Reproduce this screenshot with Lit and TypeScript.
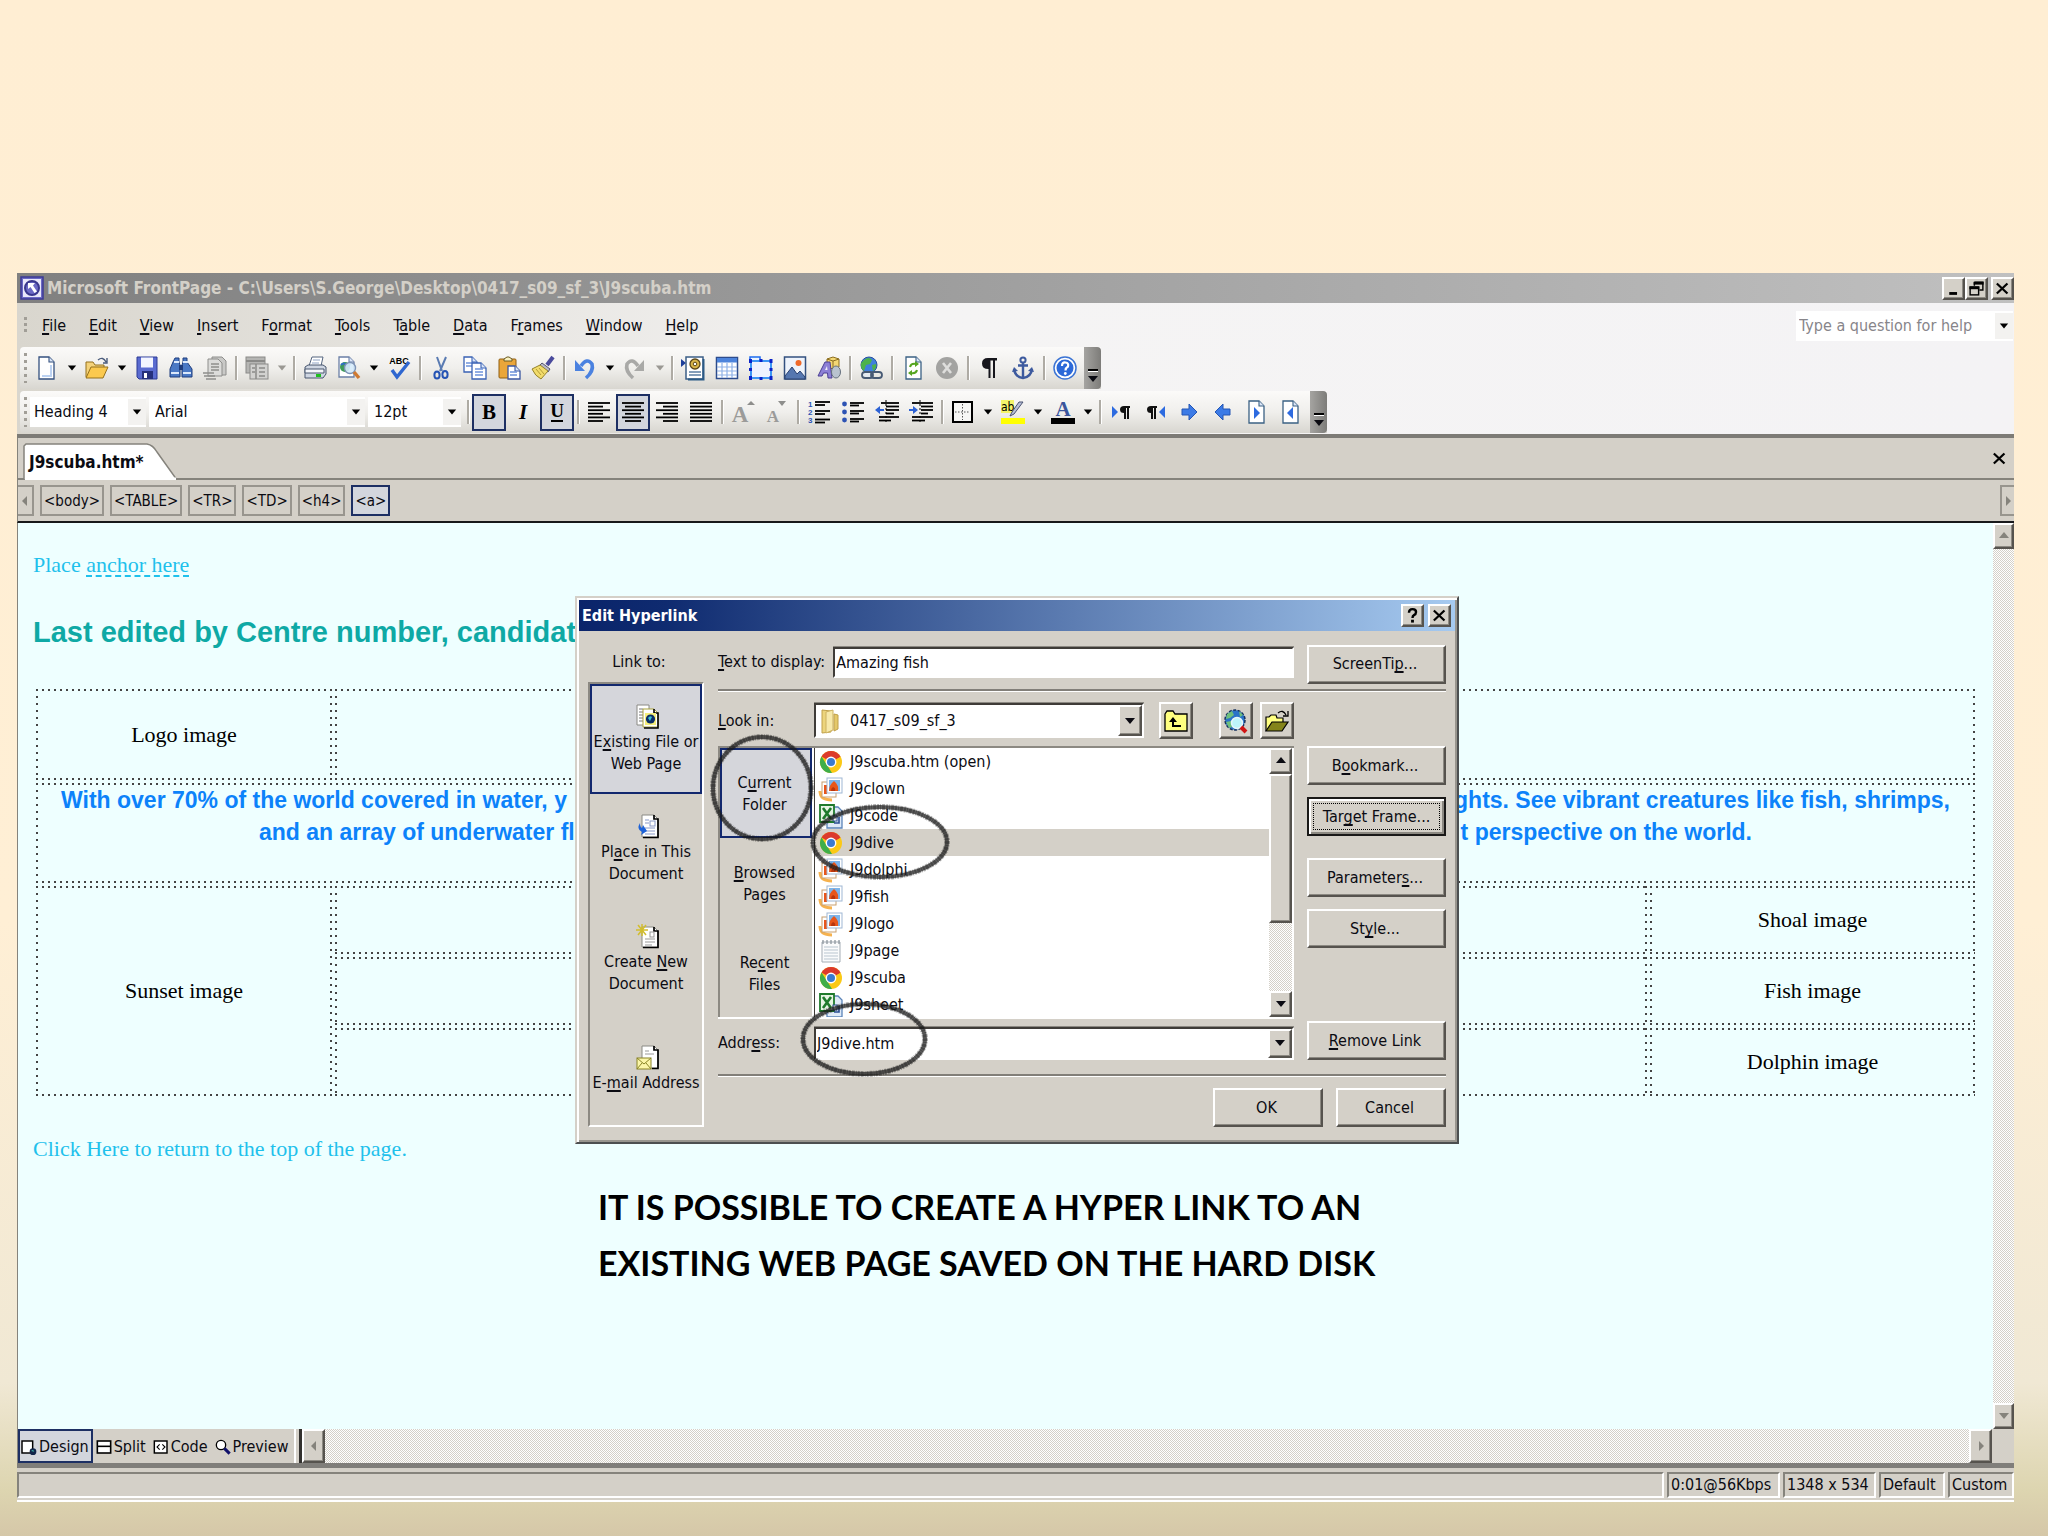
import { LitElement, html, svg, css, nothing, TemplateResult } from "lit";
import { customElement, state } from "lit/decorators.js";
import { classMap } from "lit/directives/class-map.js";

/* "&" marks the access key: "&File" underlines the F. */
const key = (text: string) => {
  const i = text.indexOf("&");
  return i < 0 ? html`${text}` : html`${text.slice(0, i)}<u>${text[i + 1]}</u>${text.slice(i + 2)}`;
};

const page = (x: number, y: number, w: number, h: number, stroke = "#2f4f86") => svg`
  <path d="M${x} ${y}h${w - 5}l5 5v${h - 5}h-${w}z" fill="#fff" stroke=${stroke} stroke-width="1.3"/>
  <path d="M${x + w - 5} ${y}v5h5" fill="#dbe6f8" stroke=${stroke} stroke-width="1.1"/>`;

const lines = (ys: [number, number, number][], color = "#000") =>
  ys.map(([y, a, b]) => svg`<path d="M${a} ${y}H${b}" stroke=${color} stroke-width="1.8"/>`);

const glyphs: Record<string, unknown> = {
  new: svg`${page(4, 1, 15, 22, "#34507f")}<path d="M7 20h9V9" fill="none" stroke="#bcd2f2" stroke-width="2"/>`,
  open: svg`<path d="M1 21V6h7l2 3h9v3" fill="#f4d27a" stroke="#94701c"/><path d="M1 22l5-11h17l-5 11z" fill="#fbc94e" stroke="#94701c"/><path d="M13 4q5-4 8 2M22 2v5h-4" fill="none" stroke="#4a5b7c" stroke-width="1.4"/>`,
  save: svg`<path d="M2 1h20v22H4l-2-2z" fill="#5a6bd0" stroke="#2c3a94"/><rect x="6" y="1.5" width="12" height="10" fill="#f3f5ff"/><rect x="7" y="15" width="11" height="8" fill="#26307c"/><rect x="9" y="17" width="3" height="5" fill="#fff"/>`,
  find: svg`<path d="M6 2h4v4l1 3v12H1v-8l3-7zM14 2h4v4l5 7v8H13V9l1-3z" fill="#4a78c4" stroke="#1f3c7c"/><path d="M2 17h8M14 17h8M5 6h5M14 6h5" stroke="#dbe8fb" stroke-width="2"/><rect x="10" y="9" width="4" height="5" fill="#1f3c7c"/>`,
  publish: svg`<path d="M9 1h10l4 4v14H9z" fill="#c9c9c7" stroke="#8e8e8c"/><path d="M5 3h10l4 4v13H5z" fill="#dcdcda" stroke="#8e8e8c"/><path d="M8 8h8M8 11h8M8 14h8M0 17h11M1 20h11M3 23h10" stroke="#8e8e8c" stroke-width="1.6"/>`,
  pane: svg`<rect x="1" y="1" width="19" height="16" fill="#b5b5b3" stroke="#8a8a88"/><path d="M1 5h19" stroke="#8a8a88" stroke-width="2"/><rect x="5" y="8" width="18" height="15" fill="#d2d2d0" stroke="#8a8a88"/><path d="M11 8v15M14 12h6M14 16h6M14 20h6M7 12h3M7 16h3" stroke="#8a8a88" stroke-width="1.5"/>`,
  print: svg`<path d="M6 10L9 1h11l-2 9" fill="#fff" stroke="#55657f"/><path d="M10 4h7M9 7h7" stroke="#8ea2c4"/><path d="M2 11l3-2h15l3 2v7l-3 4H2z" fill="#cfd6e2" stroke="#48566e"/><path d="M2 13h19v4H2z" fill="#f4f6fa" stroke="#48566e"/><rect x="13" y="18" width="5" height="3" fill="#1ec01e"/>`,
  preview: svg`${page(2, 1, 15, 20, "#6b7fa6")}<circle cx="8" cy="11" r="5" fill="#3f9c58"/><path d="M4 9q3-3 5 0t4-1" stroke="#2f6fc6" fill="none" stroke-width="2"/><circle cx="13" cy="12" r="5.5" fill="#d6ebfb" fill-opacity=".9" stroke="#7d93b5" stroke-width="1.4"/><path d="M17 16l5 6" stroke="#d07a32" stroke-width="3.4"/>`,
  spell: svg`<text x="12" y="8" font-size="9" font-weight="700" text-anchor="middle" font-family="Liberation Sans, sans-serif">ABC</text><path d="M5 14l5 7L22 6" fill="none" stroke="#2f67d0" stroke-width="3.4"/>`,
  cut: svg`<path d="M8 1l5 14M17 1l-6 14" stroke="#5a7bb2" stroke-width="2"/><ellipse cx="8" cy="19" rx="2.6" ry="3.6" fill="none" stroke="#2553b4" stroke-width="2"/><ellipse cx="16" cy="18.5" rx="2.6" ry="3.6" fill="none" stroke="#2553b4" stroke-width="2"/>`,
  copy: svg`${page(1, 1, 13, 15, "#3a62b4")}<path d="M3 7h7M3 10h6" stroke="#6d93da" stroke-width="1.4"/>${page(9, 7, 14, 16, "#3a62b4")}<path d="M12 13h8M12 16h8M12 19h8" stroke="#6d93da" stroke-width="1.4"/>`,
  paste: svg`<rect x="2" y="3" width="17" height="19" rx="1" fill="#eaa63a" stroke="#8f5f13"/><path d="M7 5V3l3-2h2l3 2v2z" fill="#f7f0c0" stroke="#6b5a22"/>${page(11, 10, 12, 13, "#3a56a0")}<path d="M13 16h7M13 19h7" stroke="#6d93da" stroke-width="1.4"/>`,
  painter: svg`<path d="M22 1l-6 8" stroke="#4a4a9c" stroke-width="4"/><path d="M11 7l8 6-2 3-9-6z" fill="#b7b7c8" stroke="#55556e"/><path d="M9 9l8 6-7 8Q4 20 1 13z" fill="#f2dc6b" stroke="#94822a"/><path d="M5 13l5 6M8 12l5 6" stroke="#b59d38"/>`,
  undo: svg`<path d="M8 10Q14 1 19 8q2 7-6 14" fill="none" stroke="#4b82e0" stroke-width="3.6"/><path d="M2 4v11h10z" fill="#4b82e0"/>`,
  redo: svg`<path d="M15 10Q9 1 4 8q-2 7 6 14" fill="none" stroke="#a9a9a7" stroke-width="3.6"/><path d="M21 4v11H11z" fill="#a9a9a7"/>`,
  component: svg`<path d="M0 3l5 4-5 4z" fill="#1d3f9a"/><rect x="5" y="1" width="17" height="22" fill="#fff" stroke="#3b5e86" stroke-width="1.5"/><path d="M22.5 3v20.5H7" fill="none" stroke="#2b5a86" stroke-width="2"/><circle cx="14" cy="8" r="5" fill="#d8b54a" stroke="#5c4718" stroke-width="1.3"/><circle cx="14" cy="8" r="1.8" fill="#fff" stroke="#5c4718"/><path d="M8 16h12M8 19h12" stroke="#5c7fa4" stroke-width="1.5"/>`,
  table: svg`<rect x="1.5" y="1.5" width="21" height="21" fill="#fff" stroke="#2d4c8c" stroke-width="1.5"/><rect x="2" y="2" width="20" height="4.5" fill="#4d84dc"/><path d="M7 7v15M12 7v15M17 7v15M2 11h20M2 15h20M2 19h20" stroke="#8fb2e8" stroke-width="1.2"/>`,
  layer: svg`<path d="M1 1h10v5H1z" fill="#eaf4ff" stroke="#1e6cf0" stroke-width="1.5"/><rect x="2" y="5" width="20" height="17" fill="#eef2ff" stroke="#2a8cf4" stroke-width="1.8"/><path d="M0 3h3v4H0zM10.5 3h3v3h-3zM20.5 3h3v4h-3zM0 12h3v3H0zM20.5 12h3v3h-3zM0 20h3v4H0zM10.5 21h3v3h-3zM20.5 20h3v4h-3z" fill="#0b23c8"/>`,
  picture: svg`<rect x="1.5" y="1" width="21" height="22" fill="#eef3fb" stroke="#33507f" stroke-width="1.5"/><circle cx="15.5" cy="7" r="3" fill="#f06a2a"/><path d="M2 20l7-9 5 7 3-3 5 6v2H2z" fill="#5577b0" stroke="#2b4270"/>`,
  drawing: svg`<path d="M10 3l6-2 6 2v8l-6 2-6-2z" fill="#f3d774" stroke="#8b6d1f"/><path d="M16 5v8M10 3l6 2 6-2" fill="none" stroke="#8b6d1f"/><path d="M8 6L1 20h4l1.5-3h4l.5 5h4L13 6z" fill="#8d80d6" stroke="#4b3f94"/><path d="M8 14l2-4 .5 4z" fill="#f0eff8"/><ellipse cx="19" cy="16" rx="4.5" ry="6" fill="#b9c3cf" stroke="#66717e"/>`,
  link: svg`<circle cx="10" cy="9" r="8" fill="#3f7fdc" stroke="#27519c"/><path d="M5 4q5-4 8 0l-2 4-4 1-2 6Q1 12 2 7zM13 9l4-1q1 4-3 7z" fill="#4db24a"/><rect x="3" y="16" width="11" height="6" rx="3" fill="#e4eaf1" stroke="#475a74" stroke-width="1.8"/><rect x="12" y="16" width="11" height="6" rx="3" fill="none" stroke="#475a74" stroke-width="1.8"/>`,
  refresh: svg`${page(5, 1, 15, 22, "#3b6184")}<path d="M9 11q1-4 6-3M16 14q-1 4-6 3" fill="none" stroke="#55a520" stroke-width="2"/><path d="M14 5l4 3-4 3zM11 14l-4 3 4 3z" fill="#55a520"/>`,
  stop: svg`<circle cx="12" cy="12" r="11" fill="#a3a3a1"/><path d="M8 7l8 10M16 7L8 17" stroke="#dededc" stroke-width="2.6"/>`,
  pilcrow: svg`<path d="M20 2v2.5h-2V22h-2V4.5h-2.5V22h-2V13Q5 13 5 7.5T11 2z" fill="#16161c"/>`,
  anchor: svg`<circle cx="12" cy="4" r="2.6" fill="none" stroke="#3d5a9e" stroke-width="2"/><path d="M12 6v16M7 9.5h10M3 13q1 8 9 9 8-1 9-9" fill="none" stroke="#3d5a9e" stroke-width="2.4"/><path d="M1 16l2-5 4 4zM23 16l-2-5-4 4z" fill="#3d5a9e"/>`,
  help: svg`<circle cx="12" cy="12" r="11" fill="#fff" stroke="#3c74d4" stroke-width="1.5"/><circle cx="12" cy="12" r="8.5" fill="#2c69d8"/><path d="M9 10q0-4 3.5-3.5t2.5 4q-2.5 1.5-2.5 4" fill="none" stroke="#fff" stroke-width="2.2"/><circle cx="12.3" cy="17.5" r="1.4" fill="#fff"/>`,
  bold: svg`<text x="12" y="19" font-size="21" font-weight="700" text-anchor="middle" font-family="Liberation Serif, serif">B</text>`,
  italic: svg`<text x="12" y="19" font-size="21" font-weight="700" font-style="italic" text-anchor="middle" font-family="Liberation Serif, serif">I</text>`,
  underline: svg`<text x="12" y="17" font-size="19" font-weight="700" text-anchor="middle" font-family="Liberation Serif, serif">U</text><path d="M6 21h12" stroke="#000" stroke-width="2"/>`,
  left: lines([[3, 1, 23], [6.6, 1, 16], [10.2, 1, 23], [13.8, 1, 16], [17.4, 1, 23], [21, 1, 16]]),
  center: lines([[3, 1, 23], [6.6, 4, 20], [10.2, 1, 23], [13.8, 4, 20], [17.4, 1, 23], [21, 4, 20]]),
  right: lines([[3, 1, 23], [6.6, 8, 23], [10.2, 1, 23], [13.8, 8, 23], [17.4, 1, 23], [21, 8, 23]]),
  justify: lines([[3, 1, 23], [6.6, 1, 23], [10.2, 1, 23], [13.8, 1, 23], [17.4, 1, 23], [21, 1, 23]]),
  grow: svg`<text x="9" y="22" font-size="23" font-weight="700" fill="#9b9b99" text-anchor="middle" font-family="Liberation Serif, serif">A</text><path d="M16 5l4-4 4 4z" fill="#8e8e8c"/>`,
  shrink: svg`<text x="8" y="22" font-size="17" font-weight="700" fill="#9b9b99" text-anchor="middle" font-family="Liberation Serif, serif">A</text><path d="M13 1h8l-4 5z" fill="#8e8e8c"/>`,
  numbers: svg`<g font-size="8" font-weight="700" fill="#2d53b4" font-family="Liberation Sans, sans-serif"><text x="1" y="7">1</text><text x="1" y="15">2</text><text x="1" y="23">3</text></g>${lines([[2, 8, 23], [5, 8, 18], [11, 8, 23], [14, 8, 18], [19.5, 8, 23], [22.5, 8, 18]])}`,
  bullets: svg`<circle cx="3.5" cy="4" r="2.4" fill="#2d53b4"/><circle cx="3.5" cy="12" r="2.4" fill="#2d53b4"/><circle cx="3.5" cy="20" r="2.4" fill="#2d53b4"/>${lines([[3, 9, 23], [5.5, 9, 18], [11, 9, 23], [13.5, 9, 18], [19, 9, 23], [21.5, 9, 18]])}`,
  outdent: svg`${lines([[3, 6, 24], [6.5, 11, 24], [10, 11, 24], [13.5, 11, 19], [17, 4, 24], [20.5, 4, 16]])}<path d="M11 0v24" stroke="#000" stroke-dasharray="2 2"/><path d="M0 10l5-4v3h4v2H5v3z" fill="#2d62d4"/>`,
  indent: svg`${lines([[3, 3, 24], [6.5, 12, 24], [10, 12, 24], [13.5, 12, 19], [17, 3, 24], [20.5, 3, 16]])}<path d="M11 0v24" stroke="#000" stroke-dasharray="2 2"/><path d="M9 10L4 6v3H0v2h4v3z" fill="#2d62d4"/>`,
  borders: svg`<rect x="2" y="2" width="19" height="20" fill="#f7f7f5" stroke="#000" stroke-width="2"/><path d="M11.5 4v16M4 12h15" stroke="#555" stroke-dasharray="1.5 1.5"/>`,
  highlight: svg`<rect x="0" y="0" width="13" height="13" fill="#f4f46a"/><text x="0" y="11" font-size="12" font-family="DejaVu Sans Condensed, sans-serif">ab</text><path d="M22 2l-9 12-4 2 2-4 7-10z" fill="#b8c0d8" stroke="#4a5270"/><rect x="0" y="18" width="24" height="6" fill="#ffff00"/>`,
  color: svg`<text x="12" y="16" font-size="21" font-weight="700" fill="#3a559c" text-anchor="middle" font-family="Liberation Serif, serif">A</text><rect x="0" y="18" width="24" height="6"/>`,
  ltr: svg`<path d="M3 6l6 6-6 6z" fill="#2d6be0"/><path d="M21 6v2h-1v11h-2V8h-1v11h-2v-6q-4 0-4-3.5T15 6z" fill="#111"/>`,
  rtl: svg`<path d="M22 6l-6 6 6 6z" fill="#2d6be0"/><path d="M14 6v2h-1v11h-2V8h-1v11H8v-6q-4 0-4-3.5T8 6z" fill="#111"/>`,
  forward: svg`<path d="M5 9h7V4l8 8-8 8v-5H5z" fill="#3c7be6" stroke="#2456b4"/>`,
  back: svg`<path d="M19 9h-7V4l-8 8 8 8v-5h7z" fill="#3c7be6" stroke="#2456b4"/>`,
  docin: svg`${page(4, 1, 15, 22, "#3b6184")}<path d="M9 7l6 6-6 6z" fill="#2d6be0"/>`,
  docout: svg`${page(4, 1, 15, 22, "#3b6184")}<path d="M14 7l-6 6 6 6z" fill="#2d6be0"/>`,
  existing: svg`<path d="M1 1h12v20H1z" fill="#fff" stroke="#8a8a84"/><path d="M3 5h4M3 8h4M3 11h4M3 14h4M3 17h4" stroke="#777"/><path d="M7 5h11l4 4v14H7z" fill="#fff" stroke="#a8a23a"/><path d="M18 5v4h4v15H8" fill="none" stroke="#000" stroke-width="1.6"/><rect x="9" y="9" width="11" height="12" fill="#f5ee7a"/><circle cx="14.5" cy="15" r="4.6" fill="#0b2c66"/><path d="M12 14q2-3 4-1l-2 4z" fill="#39c0d0"/>`,
  place: svg`<path d="M6 1h12l4 4v18H6z" fill="#fff" stroke="#8a8a84"/><path d="M18 1v4h4v18.5H7" fill="none" stroke="#000" stroke-width="1.7"/><path d="M9 6h4M9 9h4M9 14h10M9 17h10M9 20h10" stroke="#8899c8"/><rect x="14" y="7" width="5" height="5" fill="none" stroke="#8899c8"/><path d="M4 9q-4 6 2 9l-1 3 6-4-4-6-1 3q-2-1-2-5z" fill="#1d62d8"/>`,
  create: svg`<path d="M6 3h12l4 4v16H6z" fill="#fff" stroke="#8a8a84"/><path d="M18 3v4h4v16.5H7" fill="none" stroke="#000" stroke-width="1.7"/><path d="M9 15h10M9 18h10M9 21h7" stroke="#999"/><rect x="14" y="8" width="4" height="5" fill="none" stroke="#999"/><path d="M6 0v12M0 6h12M2 1l8 10M10 1L2 11" stroke="#d2bd2e" stroke-width="1.5"/>`,
  email: svg`<path d="M6 1h12l4 4v18H6z" fill="#fff" stroke="#8a8a84"/><path d="M18 1v4h4v18.5H16" fill="none" stroke="#000" stroke-width="1.7"/><path d="M9 6h4M9 9h9" stroke="#999"/><rect x="1" y="13" width="14" height="11" fill="#fbf6a8" stroke="#8a8426"/><path d="M1 13l7 6 7-6M1 24l5-6M15 24l-5-6" fill="none" stroke="#8a8426"/>`,
  up: svg`<path d="M1 5l2-3h6l2 3h12v17H1z" fill="#ffff80" stroke="#000" stroke-width="1.3"/><path d="M9 8l-4 5h3v5h9v-2h-7v-3h3z" fill="#000"/>`,
  web: svg`<circle cx="11" cy="11" r="10" fill="#2a73c8" stroke="#16305c" stroke-dasharray="3 1.5" stroke-width="1.5"/><path d="M3 5l5-3 2 4-4 3-4 1zM2 13l5-1 1 6-3 1zM15 2l4 4-3 2z" fill="#6fbf7c"/><circle cx="13" cy="14" r="5.5" fill="#bdf4fa" stroke="#e6f6fa" stroke-width="1.5"/><path d="M17 18l5 5" stroke="#d01414" stroke-width="4"/>`,
  browse: svg`<path d="M1 22V8h3l2-2h5l1 3h6v4" fill="#ffff80" stroke="#000" stroke-width="1.2"/><path d="M1 22l6-9h16l-6 9z" fill="#84841a" stroke="#000" stroke-width="1.2"/><path d="M13 4q5-4 8 2M23 2v5h-5" fill="none" stroke="#000" stroke-width="1.3"/>`,
  folder: svg`<path d="M4 1l9 1v21l-9 1z" fill="#ecd47c" stroke="#c0a04a"/><path d="M8 3l7-2v20l-7 3z" fill="#f7e9ab" stroke="#cdb260"/><path d="M16 5l4 1v14l-4 2z" fill="#e4c86a" stroke="#c0a04a"/>`,
  chrome: svg`<circle cx="12" cy="12" r="11" fill="#fbc916"/><path d="M12 12L2.5 6.5A11 11 0 0 1 21.5 6.5z" fill="#dc3a2c"/><path d="M2.5 6.5L8 15l5 8A11 11 0 0 1 2.5 6.5z" fill="#3fae49"/><path d="M21.5 6.5H12v5.5z" fill="#dc3a2c"/><circle cx="12" cy="12" r="5.4" fill="#fff"/><circle cx="12" cy="12" r="4" fill="#3a7bd0"/>`,
  image: svg`<path d="M1 14q0 9 12 9" fill="none" stroke="#f6b24e" stroke-width="3"/><rect x="3" y="5" width="14" height="15" fill="#fff" stroke="#c8a070"/><rect x="5" y="8" width="3" height="9" fill="#e8561a"/><rect x="8" y="1" width="15" height="15" fill="#fff" stroke="#9fb7d4"/><rect x="10" y="3" width="11" height="11" fill="#7cb4ea"/><path d="M10 14q0-6 5-10 5 4 4 10z" fill="#e8561a"/><path d="M12 14q0-3 2-4 3 1 2 4z" fill="#b8360e"/>`,
  excel: svg`<path d="M12 3h7l4 4v17H8V18" fill="#dfeaf8" stroke="#5b84b8" stroke-width="1.3"/><path d="M1 1h14v17H1z" fill="#e6f4e4" stroke="#1f7a2c" stroke-width="1.8"/><path d="M4 4l8 11M12 4L4 15" stroke="#1f7a2c" stroke-width="2.6"/><rect x="14" y="12" width="4" height="5" fill="#fff" stroke="#2b4f94"/><path d="M15 19h5v-6" fill="none" stroke="#2b4f94" stroke-width="1.6"/>`,
  notepad: svg`<path d="M3 3h18v20H3z" fill="#fafbfc" stroke="#a5adb5"/><path d="M5 8h14M5 11h14M5 14h14M5 17h14M5 20h14" stroke="#b9c5cf"/><path d="M4 1v4M8 1v4M12 1v4M16 1v4M20 1v4" stroke="#8e979f" stroke-width="1.3"/>`,
  app: svg`<rect x="1" y="1" width="22" height="22" fill="#6c6ac4" stroke="#3c3a94" stroke-width="1.5"/><rect x="3" y="3" width="18" height="18" fill="#e9e8fa"/><circle cx="12" cy="12" r="7" fill="#6c6ac4" stroke="#39378c" stroke-width="2"/><path d="M8 7h7l-2 2.5 4 6-2.5 1.5-4-6L8 13z" fill="#fff"/>`,
  design: svg`<rect x="1.5" y="3" width="16" height="18" fill="#fff" stroke="#000" stroke-width="2.2"/><circle cx="18" cy="19" r="5" fill="#10244a"/><path d="M15 18l3-2 2 3z" fill="#39b0a8"/>`,
  split: svg`<rect x="2" y="3" width="20" height="18" fill="#fff" stroke="#000" stroke-width="2.4"/><path d="M2 11h20" stroke="#000" stroke-width="2.4"/>`,
  code: svg`<rect x="2" y="3" width="19" height="18" fill="#fff" stroke="#000" stroke-width="2.2"/><path d="M10 8l-4 4 4 4M14 8l4 4-4 4" fill="none" stroke="#000" stroke-width="1.6"/>`,
  zoom: svg`<circle cx="9" cy="9" r="7" fill="#fff" stroke="#000" stroke-width="2"/><path d="M14 14l8 8" stroke="#10106a" stroke-width="4.5"/>`,
  close: svg`<path d="M4 5l15 14M19 5L4 19" stroke="#000" stroke-width="3.2"/>`,
  minimize: svg`<path d="M6 19h11" stroke="#000" stroke-width="4"/>`,
  restore: svg`<path d="M9 3h12v11h-5M9 3v5" fill="none" stroke="#000" stroke-width="2"/><path d="M8 4.5h14" stroke="#000" stroke-width="4"/><rect x="3" y="10" width="12" height="11" fill="none" stroke="#000" stroke-width="2"/><path d="M2 11h14" stroke="#000" stroke-width="4"/>`,
  question: svg`<path d="M7 8q0-5 5-5t5 4q0 3-3 4.5-2 1-2 4" fill="none" stroke="#000" stroke-width="3.4"/><rect x="10" y="18" width="4" height="4"/>`,
};

const icon = (name: string, cls = "icon") =>
  html`<svg class=${cls} viewBox="0 0 24 24" aria-hidden="true">${glyphs[name]}</svg>`;

const tri = (dir: "up" | "down" | "left" | "right", cls = "tri") => {
  const d = { up: "M1 8L6 2l5 6z", down: "M1 3h10L6 9z", left: "M8 1L3 6l5 5z", right: "M4 1l5 5-5 5z" }[dir];
  return html`<svg class=${cls} viewBox="0 0 12 12" aria-hidden="true"><path d=${d} fill="currentColor"/></svg>`;
};

/* Toolbar entries: an icon name, "v" for a drop-down arrow, "|" for a separator.
   "!" marks a pressed button, "~" a disabled one. */
const STANDARD = "new v open v save find publish~ | pane~ v~ | print preview v spell | cut copy paste painter | undo v redo~ v~ | component table layer picture drawing | link | refresh stop~ | pilcrow anchor | help".split(" ");
const FORMATTING = "| bold! italic underline! | left center! right justify | grow~ shrink~ | numbers bullets outdent indent | borders v highlight v color v | ltr rtl forward back docin docout".split(" ");
const MENUS = ["&File", "&Edit", "&View", "&Insert", "F&ormat", "&Tools", "T&able", "&Data", "F&rames", "&Window", "&Help"];
const TAGS = ["<body>", "<TABLE>", "<TR>", "<TD>", "<h4>", "<a>"];
const FILES: [string, string][] = [
  ["chrome", "J9scuba.htm (open)"], ["image", "J9clown"], ["excel", "J9code"], ["chrome", "J9dive"], ["image", "J9dolphi"],
  ["image", "J9fish"], ["image", "J9logo"], ["notepad", "J9page"], ["chrome", "J9scuba"], ["excel", "J9sheet"],
];
const PLACES: [string, string, string][] = [
  ["existing", "E&xisting File or", "Web Page"], ["place", "Pl&ace in This", "Document"],
  ["create", "Create &New", "Document"], ["email", "E-&mail Address", ""],
];
const SCOPES: [string, string][] = [["C&urrent", "Folder"], ["&Browsed", "Pages"], ["Re&cent", "Files"]];
const RINGS = [[185, 190, 49, 51], [303, 244, 67, 35], [287, 441, 61, 35]];

const base = css`
  * { box-sizing: border-box; }
  button, input, select { font: inherit; color: inherit; margin: 0; padding: 0; border: 0; border-radius: 0; background: none; }
  select { appearance: none; }
  u { text-decoration: underline; text-decoration-thickness: 2px; text-underline-offset: 2px; text-decoration-skip-ink: none; }
  .icon { width: 24px; height: 24px; display: block; flex: none; overflow: visible; }
  .small { width: 16px; height: 18px; flex: none; }
  .tri { width: 12px; height: 12px; display: block; flex: none; }
  .bevel {
    background: #d4d0c8; border: 2px solid; border-color: #fff #56534e #56534e #fff;
    box-shadow: inset -1px -1px #8c8982; display: flex; align-items: center; justify-content: center;
  }
  .track { background: repeating-conic-gradient(#fff 0 25%, #d4d0c8 0 50%) 0 0 / 2px 2px; }
  .combo { display: grid; grid-template-columns: minmax(0, 1fr) auto; }
  .combo > select, .combo > input { grid-area: 1 / 1 / 2 / 3; min-width: 0; width: 100%; height: 100%; }
  .combo > .drop { grid-area: 1 / 2; pointer-events: none; }
`;

@customElement("tool-strip")
class ToolStrip extends LitElement {
  static properties = { items: { attribute: false } };
  declare items: string[];

  static styles = [base, css`
    :host { display: flex; height: 42px; align-items: center; width: fit-content; padding-left: 10px;
      background: linear-gradient(#fbfaf9, #f0efec 50%, #d8d6d0); border-radius: 4px 0 0 4px; position: relative; }
    .grip { width: 3px; height: 30px; margin: 0 3px 0 -6px; background: repeating-linear-gradient(#a19e97 0 3px, transparent 3px 7px); }
    .tool { width: 34px; height: 37px; display: flex; align-items: center; justify-content: center; }
    .pressed { background: #d3d6dd; border: 2px solid #1d2f63; }
    .arrow { width: 16px; height: 37px; display: flex; align-items: center; justify-content: center; color: #000; }
    .arrow .tri { width: 10px; height: 10px; }
    .dim { color: #9a9893; }
    .sep { width: 8px; height: 24px; display: flex; justify-content: center; }
    .sep::before { content: ""; width: 2px; background: #aeaba4; border-right: 1px solid #fff; }
    .more { width: 17px; height: 42px; margin-left: 2px; background: linear-gradient(90deg, #a5a4a1, #7d7c79);
      border-radius: 0 4px 4px 0; display: flex; flex-direction: column; align-items: center; justify-content: flex-end; padding-bottom: 4px; gap: 1px; }
    .more::before { content: ""; width: 10px; height: 2px; background: #000; border-bottom: 1px solid #fff; }
  `];

  render() {
    return html`<span class="grip"></span><slot></slot>
      ${this.items.map((raw) => {
        const off = raw.endsWith("~"), on = raw.endsWith("!"), name = raw.replace(/[~!]$/, "");
        if (name === "|") return html`<span class="sep"></span>`;
        if (name === "v") return html`<button class=${classMap({ arrow: true, dim: off })} ?disabled=${off} aria-label="Options">${tri("down")}</button>`;
        return html`<button class=${classMap({ tool: true, pressed: on })} ?disabled=${off} aria-label=${name}>${icon(name)}</button>`;
      })}
      <button class="more" aria-label="Toolbar options">${tri("down")}</button>`;
  }
}

@customElement("link-dialog")
class LinkDialog extends LitElement {
  @state() selected = 3;

  static styles = [base, css`
    :host { display: block; background: #d4d0c8; border: 2px solid; border-color: #d4d0c8 #4c4f50 #4c4f50 #d4d0c8;
      box-shadow: inset 2px 2px #fff, inset -2px -2px #98958e; padding: 2px; position: relative; }
    .title { height: 31px; display: flex; align-items: center; gap: 4px; padding: 0 4px 0 3px; color: #fff; font-weight: 700; font-size: 16px;
      background: linear-gradient(90deg, #0a246a, #0f2b70 10%, #a6caf0); }
    .title h1 { flex: 1; margin: 0; font-size: inherit; }
    .title .bevel { width: 23px; height: 23px; }
    .title .icon { width: 17px; height: 17px; }
    .body { display: flex; gap: 14px; padding: 13px 9px; }
    .places { width: 116px; display: flex; flex-direction: column; }
    .caption { height: 38px; line-height: 36px; text-align: center; padding-right: 14px; }
    .bar { flex: 1; border: 2px solid; border-color: #8c8982 #fff #fff #8c8982; display: flex; flex-direction: column; }
    .place { height: 110px; display: flex; flex-direction: column; align-items: center; justify-content: center; line-height: 22px; white-space: nowrap; padding-top: 1px; }
    .place .icon { margin: 0 0 3px 4px; }
    .place span { display: block; }
    .on { background: #d5d6db; box-shadow: inset 0 0 0 2px #12286e; }
    .main { flex: 1; min-width: 0; }
    .row { display: flex; align-items: center; }
    .first { height: 40px; gap: 13px; }
    .first .row { flex: 1; gap: 8px; height: 36px; align-self: flex-start; }
    .field { background: #fff; border: 2px solid; border-color: #3f3c38 #fff #fff #3f3c38; box-shadow: 0 -1px #8c8982; }
    .first .field { flex: 1; min-width: 0; height: 31px; padding: 0 1px; }
    .push { width: 139px; height: 39px; padding-right: 3px; }
    .focus { border-color: #1a1918; box-shadow: inset 2px 2px #fff, inset -2px -2px #8c8982; padding: 4px; }
    .focus span { border: 1px dotted #000; flex: 1; align-self: stretch; display: flex; align-items: center; justify-content: center; white-space: pre; }
    hr { height: 3px; border: 0; margin: 5px 0 10px; background: linear-gradient(#827f79 50%, #fff 50%); }
    .low { margin: 14px 0 11px; }
    .middle { display: flex; gap: 13px; }
    .browse { flex: 1; min-width: 0; display: flex; flex-direction: column; gap: 7px; }
    .side { display: flex; flex-direction: column; gap: 12px; padding-top: 44px; }
    .gap { margin-top: 10px; }
    .end { margin-top: auto; }
    .look { height: 37px; }
    .look label, .address label { width: 96px; }
    .look .combo { width: 330px; height: 35px; margin-right: 15px; }
    .look select { padding-left: 34px; }
    .look .icon.pic { grid-area: 1 / 1; align-self: center; margin-left: 2px; pointer-events: none; }
    .drop { width: 24px; }
    .mini { width: 34px; height: 37px; }
    .far { margin: 0 7px 0 26px; }
    .panes { display: flex; height: 273px; border-top: 2px solid #8c8982; border-bottom: 2px solid #fff; }
    .scopes { width: 96px; border-left: 2px solid #8c8982; border-right: 2px solid #fff; }
    .scopes button { display: block; width: 100%; height: 90px; line-height: 22px; padding: 1px 3px 0 0; }
    .list { flex: 1; min-width: 0; margin: 0; padding: 0; list-style: none; background: #fff; overflow: hidden; border-left: 1px solid #3f3c38; }
    .list button { display: flex; width: 100%; height: 27px; align-items: center; gap: 7px; padding-left: 4px; }
    .list .sel { background: #d4d0c8; }
    .scroll { width: 25px; border-right: 2px solid #fff; display: flex; flex-direction: column; }
    .scroll .bevel { height: 26px; }
    .scroll .thumb { height: 149px; }
    .scroll .track { flex: 1; }
    .address { height: 34px; }
    .address .combo { flex: 1; height: 33px; }
    .address input { padding-left: 1px; }
    .foot { display: flex; justify-content: flex-end; gap: 13px; }
    .foot .push { width: 110px; }
    .rings { position: absolute; left: 0; top: 0; width: 100%; height: 100%; pointer-events: none; fill: none; stroke: #1b1b1b; stroke-opacity: .7; stroke-width: 4; }
    .rough { stroke-width: 6; stroke-dasharray: 2 1 1 1 3 1; stroke-opacity: .35; }
  `];

  render() {
    const push = (t: string, cls = "") => html`<button class="bevel push ${cls}"><span>${key(t)}</span></button>`;
    return html`
      <header class="title"><h1>Edit Hyperlink</h1>
        <button class="bevel" aria-label="Help">${icon("question")}</button>
        <button class="bevel" aria-label="Close">${icon("close")}</button>
      </header>
      <div class="body">
        <nav class="places"><div class="caption">Link to:</div>
          <div class="bar">${PLACES.map(([ic, a, b], i) => html`
            <button class=${classMap({ place: true, on: i === 0 })}>${icon(ic)}<span>${key(a)}</span>${b ? html`<span>${b}</span>` : nothing}</button>`)}
          </div>
        </nav>
        <div class="main">
          <div class="row first">
            <div class="row"><label for="display">${key("&Text to display:")}</label><input id="display" class="field" .value=${"Amazing fish"} /></div>
            ${push("ScreenTi&p...")}
          </div>
          <hr />
          <div class="middle">
            <div class="browse">
              <div class="row look"><label for="look">${key("&Look in:")}</label>
                <span class="combo field"><select id="look"><option>0417_s09_sf_3</option></select>${icon("folder", "icon pic")}<span class="bevel drop">${tri("down")}</span></span>
                <button class="bevel mini" aria-label="Up one folder">${icon("up")}</button>
                <button class="bevel mini far" aria-label="Browse the web">${icon("web")}</button>
                <button class="bevel mini" aria-label="Browse for file">${icon("browse")}</button>
              </div>
              <div class="panes">
                <div class="scopes">${SCOPES.map(([a, b], i) => html`<button class=${classMap({ on: i === 0 })}>${key(a)}<br />${b}</button>`)}</div>
                <ul class="list">${FILES.map(([ic, name], i) => html`
                  <li><button class=${classMap({ sel: i === this.selected })} @click=${() => (this.selected = i)}>${icon(ic)}${name}</button></li>`)}
                </ul>
                <div class="scroll"><button class="bevel" aria-label="Scroll up">${tri("up")}</button><div class="bevel thumb"></div><div class="track"></div>
                  <button class="bevel" aria-label="Scroll down">${tri("down")}</button></div>
              </div>
              <div class="row address"><label for="address">${key("Addr&ess:")}</label>
                <span class="combo field"><input id="address" .value=${"J9dive.htm"} /><span class="bevel drop">${tri("down")}</span></span>
              </div>
            </div>
            <div class="side">${push("B&ookmark...")}${push("Tar&get Frame...", "focus")}${push("Parameter&s...", "gap")}${push("St&yle...")}${push("&Remove Link", "end")}</div>
          </div>
          <hr class="low" />
          <div class="foot">${push("OK")}${push("Cancel")}</div>
        </div>
      </div>
      <svg class="rings" aria-hidden="true">
        ${RINGS.map(([x, y, a, b]) => svg`<ellipse cx=${x} cy=${y} rx=${a} ry=${b} /><ellipse class="rough" cx=${x} cy=${y} rx=${a} ry=${b} />`)}
      </svg>`;
  }
}

@customElement("app-root")
class AppRoot extends LitElement {
  static styles = [base, css`
    :host { display: flex; min-height: 100vh; padding: 273px 34px 34px 17px; font: 16px/20px "DejaVu Sans Condensed", "Noto Sans", sans-serif; color: #0b0b12;
      background: linear-gradient(#ffeed3, #ffefd5 60%, #f0e8d4 90%, #ddd5b0 97%, #d5c7a8); box-sizing: border-box; }
    .window { flex: 1; min-width: 0; display: flex; flex-direction: column; position: relative; background: #d4d0c8; }
    .title { height: 30px; display: flex; align-items: center; padding-left: 3px; gap: 3px; color: #d4d0c8; font-weight: 700; font-size: 17px;
      background: linear-gradient(90deg, #808080, #c0c0c0); }
    .title h1 { flex: 1; font-size: inherit; margin: 0; white-space: nowrap; }
    .title .bevel { width: 23px; height: 23px; margin-left: -3px; }
    .title .bevel:last-child { margin-left: 0; }
    .title .bevel .icon { width: 17px; height: 17px; }
    .bars { background: linear-gradient(90deg, #d9d6ce, #f5f4f4 45%, #f4f3f5); border-bottom: 4px solid #7d7b76; padding-bottom: 1px; }
    .menu { height: 44px; display: flex; align-items: center; padding: 1px 0 0 7px; }
    .menu button { padding: 0 11px 0 12px; white-space: nowrap; }
    .grip { width: 3px; height: 18px; margin-right: 3px; background: repeating-linear-gradient(#a19e97 0 3px, transparent 3px 6px); }
    .ask { margin-left: auto; width: 217px; height: 30px; margin-right: 1px; background: #fff; color: #87858a; }
    .ask input { padding: 0 3px; }
    .drop { width: 18px; margin: 2px 0 2px 2px; background: #f3f2f0; color: #000; display: flex; align-items: center; justify-content: center; }
    .drop .tri { width: 10px; height: 10px; }
    tool-strip { margin-left: 3px; }
    tool-strip + tool-strip { margin-top: 2px; }
    tool-strip .combo { background: #fff; height: 30px; margin-right: 3px; flex: none; }
    tool-strip select { padding-left: 6px; }
    tool-strip .style select { padding-left: 4px; }
    .style { width: 116px; } .font { width: 216px; } .size { width: 93px; }
    .tabs { height: 42px; display: flex; align-items: flex-end; border-bottom: 2px solid #85837c; border-left: 1px solid #85837c; }
    .tab { display: grid; width: 154px; height: 37px; margin: 0 0 -2px 5px; text-align: left; font-weight: 700; font-size: 17px; }
    .tab > * { grid-area: 1 / 1; align-self: center; }
    .tab svg { width: 154px; height: 37px; }
    .tab span { padding-left: 6px; z-index: 1; }
    .tabs .x { margin: 0 6px 11px auto; }
    .tabs .x .icon { width: 17px; height: 17px; }
    .tags { height: 43px; display: flex; align-items: center; gap: 6px; border-bottom: 2px solid #17181a; border-left: 1px solid #85837c; font-size: 15px; }
    .tag { height: 31px; border: 2px solid #98958e; padding: 0 2px; }
    .tag.cur { border-color: #1d2f63; background: #d3d6dd; }
    .edge { width: 16px; height: 31px; border: 2px solid #98958e; border-left-width: 0; color: #85837c; display: flex; align-items: center; justify-content: center; }
    .edge.end { margin-left: auto; width: 14px; border-width: 2px 0 2px 2px; }
    .view { flex: 1; display: flex; min-height: 0; border-left: 1px solid #85837c; }
    .doc { flex: 1; min-width: 0; background: #eff; padding: 30px 15px 0; font: 22px/24px "Liberation Serif", serif; color: #000; }
    .doc p { margin: 0; color: #1fc1ec; }
    .doc p a { color: inherit; text-decoration: none; }
    .doc p .mark { text-decoration: underline dashed; text-decoration-thickness: 2px; text-underline-offset: 3px; }
    .doc h2 { margin: 37px 0 36px; color: #0ea9a5; font: 700 29px/36px "Liberation Sans", sans-serif; white-space: nowrap; }
    table { border-spacing: 3px; width: 100%; table-layout: fixed; margin-bottom: 38px; }
    td { padding: 2px; text-align: center; height: 68px;
      background:
        repeating-linear-gradient(90deg, #444 0 2px, transparent 2px 6px) 0 0 / 100% 2px no-repeat,
        repeating-linear-gradient(90deg, #444 0 2px, transparent 2px 6px) 0 100% / 100% 2px no-repeat,
        repeating-linear-gradient(#444 0 2px, transparent 2px 7px) 0 0 / 2px 100% no-repeat,
        repeating-linear-gradient(#444 0 2px, transparent 2px 7px) 100% 0 / 2px 100% no-repeat; }
    .c1 { width: 296px; } .c3 { width: 325px; }
    .tall { height: 91px; }
    .intro { height: 100px; vertical-align: top; padding: 1px 25px 0; color: #0c82fa; font: 700 23px/32px "Liberation Sans", sans-serif; }
    .pair { display: flex; justify-content: space-between; white-space: nowrap; }
    .inner { padding: 0 198px; }
    .vscroll { width: 21px; display: flex; flex-direction: column; color: #85837c; }
    .vscroll .bevel { height: 26px; }
    .vscroll .track { flex: 1; }
    .modes { height: 34px; display: flex; color: #0b0b12; border-left: 1px solid #85837c; }
    .mode { display: flex; align-items: center; gap: 2px; padding: 2px 4px 0 3px; white-space: nowrap; }
    .mode.cur { background: #d3d6dd; box-shadow: inset 0 0 0 2px #1d2f63; }
    .divide { width: 8px; flex: none; margin-left: auto; background: #d4d0c8; border-left: 2px solid #fff; border-right: 3px solid #33312e; }
    .left { width: 284px; display: flex; flex: none; }
    .modes .bevel { width: 23px; color: #85837c; }
    .modes .track { flex: 1; }
    .corner { width: 22px; }
    .status { display: flex; gap: 3px; height: 39px; padding: 4px 0 4px; border-top: 5px solid #807e7a; box-shadow: inset 0 -2px #fff; }
    .status div { width: 113px; border: 2px solid; border-color: #85837c #fff #fff #85837c; padding: 1px 0 0 2px; white-space: nowrap; }
    .status .grow { flex: 1; }
    .status .w2 { width: 93px; } .status .w3 { width: 66px; }
    link-dialog { position: absolute; left: 558px; top: 323px; width: 884px; }
    .note { position: absolute; left: 581px; top: 906px; margin: 0; color: #000; font: 700 34px/56px Lato, sans-serif; white-space: nowrap; }
  `];

  render(): TemplateResult {
    const combo = (cls: string, label: string, value: string) => html`
      <span class="combo ${cls}"><select aria-label=${label}><option>${value}</option></select><span class="drop">${tri("down")}</span></span>`;
    return html`<main class="window">
      <header class="title">${icon("app")}<h1>Microsoft FrontPage - C:\\Users\\S.George\\Desktop\\0417_s09_sf_3\\J9scuba.htm</h1>
        ${["minimize", "restore", "close"].map((n) => html`<button class="bevel" aria-label=${n}>${icon(n)}</button>`)}
      </header>
      <div class="bars">
        <nav class="menu"><span class="grip"></span>${MENUS.map((m) => html`<button>${key(m)}</button>`)}
          <span class="combo ask"><input aria-label="Help question" .value=${"Type a question for help"} /><span class="drop">${tri("down")}</span></span>
        </nav>
        <tool-strip .items=${STANDARD}></tool-strip>
        <tool-strip .items=${FORMATTING}>
          ${combo("style", "Style", "Heading 4")}${combo("font", "Font", "Arial")}${combo("size", "Font size", "12pt")}
        </tool-strip>
      </div>
      <div class="tabs"><button class="tab">
          <svg viewBox="0 0 154 37" aria-hidden="true"><path d="M1 37V3l2-2h121q6 1 10 8l20 28z" fill="#fff" stroke="#85837c" stroke-width="1.5"/><path d="M2 36h151" stroke="#fff" stroke-width="3"/></svg>
          <span>J9scuba.htm*</span></button>
        <button class="x" aria-label="Close page">${icon("close")}</button>
      </div>
      <div class="tags"><button class="edge" aria-label="Previous tags">${tri("left")}</button>
        ${TAGS.map((t, i) => html`<button class=${classMap({ tag: true, cur: i === TAGS.length - 1 })}>${t}</button>`)}
        <button class="edge end" aria-label="More tags">${tri("right")}</button>
      </div>
      <div class="view">
        <article class="doc">
          <p>Place <span class="mark">anchor here</span></p>
          <h2>Last edited by Centre number, candidat</h2>
          <table>
            <colgroup><col class="c1" /><col /><col class="c3" /></colgroup>
            <tr><td class="tall">Logo image</td><td colspan="2"></td></tr>
            <tr><td class="intro" colspan="3">
              <div class="pair"><span>With over 70% of the world covered in water, y</span><span>ghts. See vibrant creatures like fish, shrimps,</span></div>
              <div class="pair inner"><span>and an array of underwater fl</span><span>t perspective on the world.</span></div>
            </td></tr>
            <tr><td rowspan="3">Sunset image</td><td></td><td>Shoal image</td></tr>
            <tr><td></td><td>Fish image</td></tr>
            <tr><td></td><td>Dolphin image</td></tr>
          </table>
          <p><a href="#top">Click Here to return to the top of the page.</a></p>
        </article>
        <div class="vscroll"><button class="bevel" aria-label="Scroll up">${tri("up")}</button><div class="track"></div><button class="bevel" aria-label="Scroll down">${tri("down")}</button></div>
      </div>
      <div class="modes">
        <div class="left">
          ${[["design", "Design"], ["split", "Split"], ["code", "Code"], ["zoom", "Preview"]].map(([ic, t], i) => html`
            <button class=${classMap({ mode: true, cur: i === 0 })}>${icon(ic, "small")}${t}</button>`)}
          <span class="divide"></span>
        </div>
        <button class="bevel" aria-label="Scroll left">${tri("left")}</button><div class="track"></div>
        <button class="bevel" aria-label="Scroll right">${tri("right")}</button><span class="corner"></span>
      </div>
      <footer class="status"><div class="grow"></div><div>0:01@56Kbps</div><div class="w2">1348 x 534</div><div class="w3">Default</div><div class="w3">Custom</div></footer>
      <link-dialog></link-dialog>
      <p class="note">IT IS POSSIBLE TO CREATE A HYPER LINK TO AN<br />EXISTING WEB PAGE SAVED ON THE HARD DISK</p>
    </main>`;
  }
}
